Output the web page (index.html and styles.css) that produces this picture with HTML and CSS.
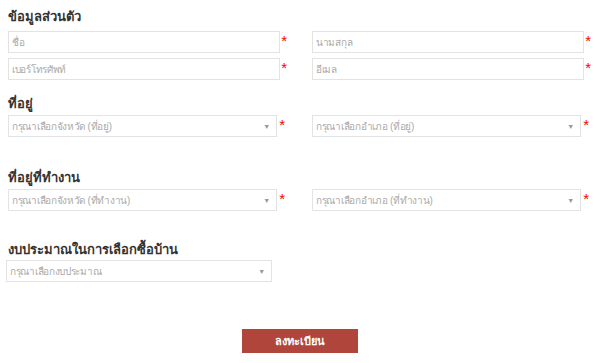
FILE: index.html
```html
<!DOCTYPE html>
<html lang="th">
<head>
    <meta charset="UTF-8">
    <meta name="viewport" content="width=device-width, initial-scale=1.0">
    <title>ลงทะเบียน</title>
    <link rel="stylesheet" href="styles.css">
</head>
<body>
    <form class="register">
        <h2 class="section-title first">ข้อมูลส่วนตัว</h2>
        <div class="row">
            <div class="field"><input type="text" placeholder="ชื่อ"><span class="req">*</span></div>
            <div class="field"><input type="text" placeholder="นามสกุล"><span class="req">*</span></div>
        </div>
        <div class="row">
            <div class="field"><input type="text" placeholder="เบอร์โทรศัพท์"><span class="req">*</span></div>
            <div class="field"><input type="text" placeholder="อีเมล"><span class="req">*</span></div>
        </div>

        <h2 class="section-title">ที่อยู่</h2>
        <div class="row">
            <div class="field">
                <div class="select">กรุณาเลือกจังหวัด (ที่อยู่)<span class="arrow">▼</span></div><span class="req sel">*</span>
            </div>
            <div class="field">
                <div class="select">กรุณาเลือกอำเภอ (ที่อยู่)<span class="arrow">▼</span></div><span class="req sel">*</span>
            </div>
        </div>

        <h2 class="section-title work">ที่อยู่ที่ทำงาน</h2>
        <div class="row">
            <div class="field">
                <div class="select">กรุณาเลือกจังหวัด (ที่ทำงาน)<span class="arrow">▼</span></div><span class="req sel">*</span>
            </div>
            <div class="field">
                <div class="select">กรุณาเลือกอำเภอ (ที่ทำงาน)<span class="arrow">▼</span></div><span class="req sel">*</span>
            </div>
        </div>

        <h2 class="section-title budget">งบประมาณในการเลือกซื้อบ้าน</h2>
        <div class="row">
            <div class="field">
                <div class="select narrow">กรุณาเลือกงบประมาณ<span class="arrow">▼</span></div>
            </div>
        </div>

        <div class="actions">
            <button type="button" class="submit">ลงทะเบียน</button>
        </div>
    </form>
</body>
</html>
```

FILE: styles.css
```css
body {
    margin: 0;
    background: #fff;
    font-family: "Liberation Sans", "DejaVu Sans", sans-serif;
    color: #333;
}
.register {
    padding: 0 8px;
}
.section-title {
    font-size: 13px;
    font-weight: bold;
    line-height: 20px;
    margin: 14px 0 1px;
    color: #333;
}
.section-title.first {
    margin-top: 7px;
    margin-bottom: 4px;
}
.section-title.work {
    margin-top: 31px;
}
.section-title.budget {
    margin-top: 29px;
    margin-bottom: 0;
}
.row {
    display: flex;
    gap: 32px;
    margin-bottom: 5px;
}
.field {
    display: flex;
    align-items: flex-start;
    width: 272px;
    position: relative;
}
input,
.select {
    box-sizing: border-box;
    width: 272px;
    height: 22px;
    border: 1px solid #e3e3e3;
    padding: 0 3px;
    font-family: inherit;
    font-size: 10px;
    letter-spacing: -0.3px;
    color: #555;
    background: #fff;
    outline: none;
}
input::placeholder {
    color: #aaa;
}
.select {
    width: 269px;
    display: flex;
    align-items: center;
    justify-content: space-between;
    color: #aaa;
    margin-right: 3px;
}
.select.narrow {
    width: 266px;
    margin-left: -2px;
}
.arrow {
    font-size: 7px;
    color: #999;
    margin-right: 3px;
}
.req {
    position: absolute;
    right: -7px;
    top: 2px;
    color: #f00;
    font-size: 15px;
    line-height: 15px;
}
.req.sel {
    right: -5px;
}
.actions {
    display: flex;
    justify-content: center;
    margin-top: 47px;
}
.submit {
    width: 116px;
    height: 24px;
    border: none;
    background: #b0463b;
    color: #fff;
    font-family: inherit;
    font-size: 11px;
    font-weight: bold;
    cursor: pointer;
}
```
